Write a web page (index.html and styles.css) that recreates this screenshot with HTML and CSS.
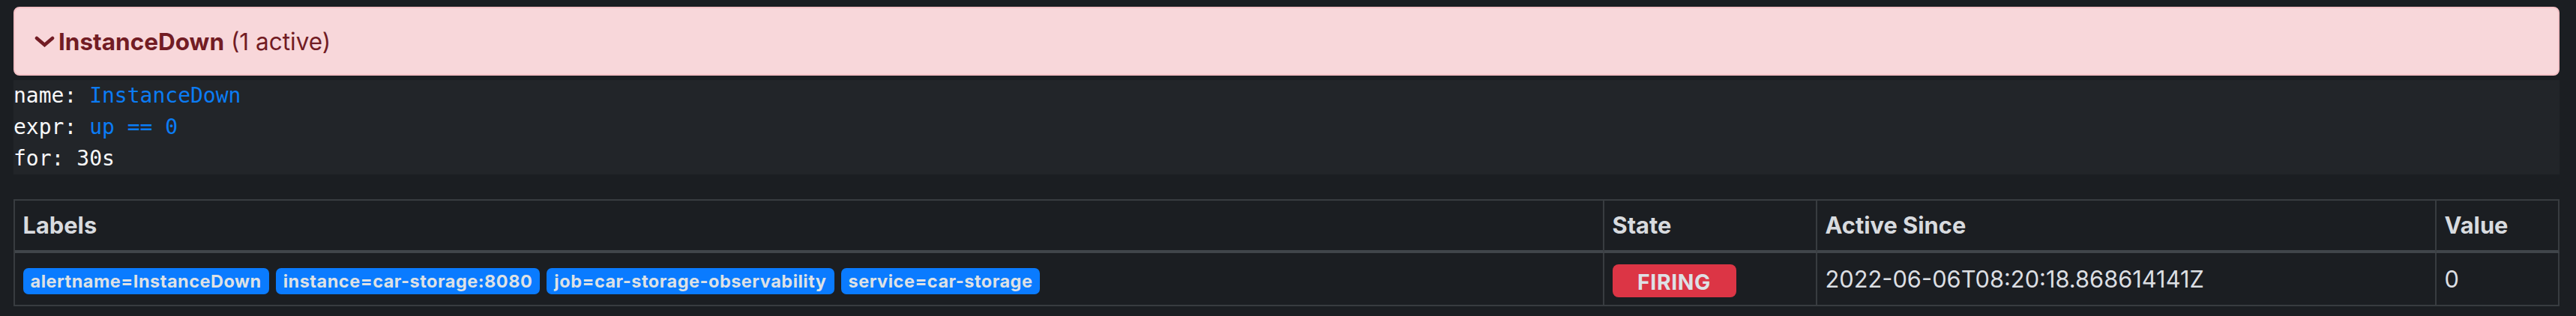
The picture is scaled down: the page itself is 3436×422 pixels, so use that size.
FILE: index.html
```html
<!DOCTYPE html>
<html lang="en">
<head>
<meta charset="utf-8">
<title>Alerts</title>
<link rel="stylesheet" href="styles.css">
</head>
<body>
<div class="page">
  <div class="alert">
    <svg class="chev" viewBox="0 0 27 15" aria-hidden="true"><polyline points="3,3 13.5,12 24,3" fill="none" stroke="#721c24" stroke-width="4.6" stroke-linecap="round" stroke-linejoin="miter"/></svg>
    <span class="alert-name">InstanceDown</span>&nbsp;<span class="alert-count">(1 active)</span>
  </div>
  <pre class="rule"><code>name: <span class="v">InstanceDown</span>
expr: <span class="v">up == 0</span>
for: 30s</code></pre>
  <table class="alerts">
    <colgroup>
      <col class="c-labels"><col class="c-state"><col class="c-since"><col class="c-value">
    </colgroup>
    <thead>
      <tr><th>Labels</th><th>State</th><th>Active Since</th><th>Value</th></tr>
    </thead>
    <tbody>
      <tr>
        <td><div class="labels">
          <span class="badge">alertname=InstanceDown</span>
          <span class="badge">instance=car-storage:8080</span>
          <span class="badge">job=car-storage-observability</span>
          <span class="badge">service=car-storage</span>
        </div></td>
        <td><div class="state"><span class="firing">FIRING</span></div></td>
        <td><div class="txt">2022-06-06T08:20:18.868614141Z</div></td>
        <td><div class="txt">0</div></td>
      </tr>
    </tbody>
  </table>
</div>
</body>
</html>
```
FILE: styles.css
```css
html, body {
  margin: 0;
  background: #1b1e22;
}
body {
  font-family: Inter, "Noto Sans", sans-serif;
  color: #dadde1;
}
.page {
  padding: 9px 22px 0 18px;
}
.alert {
  box-sizing: border-box;
  height: 92px;
  display: flex;
  align-items: center;
  padding-left: 26px;
  background: #f8d7da;
  border: 2px solid #f5c2c7;
  border-radius: 8px;
  color: #721c24;
  font-size: 31.5px;
  white-space: pre;
}
.chev {
  width: 27px;
  height: 15px;
  margin-right: 5px;
  flex: none;
}
.alert-name {
  font-weight: 700;
}
.rule {
  margin: 6px 0 0;
  height: 126px;
  background: #222529;
  font-family: "DejaVu Sans Mono", monospace;
  font-size: 28px;
  line-height: 42px;
  color: #f8f9fa;
}
.rule code {
  font-family: inherit;
}
.v {
  color: #0b7cf4;
}
.alerts {
  margin-top: 33px;
  width: 100%;
  border-collapse: separate;
  border-spacing: 0;
  table-layout: fixed;
  border-top: 2px solid #383c40;
  border-left: 2px solid #383c40;
  font-size: 30.8px;
}
.c-labels { width: 2120px; }
.c-state { width: 284px; }
.c-since { width: 826px; }
.c-value { width: 164px; }
.alerts th,
.alerts td {
  box-sizing: border-box;
  border-right: 2px solid #383c40;
  text-align: left;
}
.alerts th {
  padding: 10px 10.5px;
  line-height: 46px;
  font-weight: 700;
  border-bottom: 4px solid #40454a;
  color: #d8dbdf;
}
.alerts td {
  padding: 0 10.5px;
  height: 71px;
  vertical-align: top;
  border-bottom: 2px solid #383c40;
}
.labels {
  display: flex;
  gap: 9px;
  padding-top: 20.3px;
}
.badge {
  height: 35px;
  line-height: 35px;
  padding: 0 10px;
  border-radius: 7px;
  background: #0a7bff;
  color: #dde1e5;
  font-size: 23.5px;
  font-weight: 700;
  letter-spacing: 0.5px;
  white-space: nowrap;
}
.state {
  padding-top: 15.3px;
}
.firing {
  box-sizing: border-box;
  display: inline-flex;
  align-items: center;
  justify-content: center;
  width: 165px;
  height: 44px;
  padding-top: 3px;
  border-radius: 8px;
  background: #dc3545;
  color: #dde1e5;
  font-size: 28.4px;
  font-weight: 700;
  letter-spacing: 0.6px;
}
.txt {
  padding-top: 11.8px;
  line-height: 46px;
  color: #dcdfe3;
}
```
